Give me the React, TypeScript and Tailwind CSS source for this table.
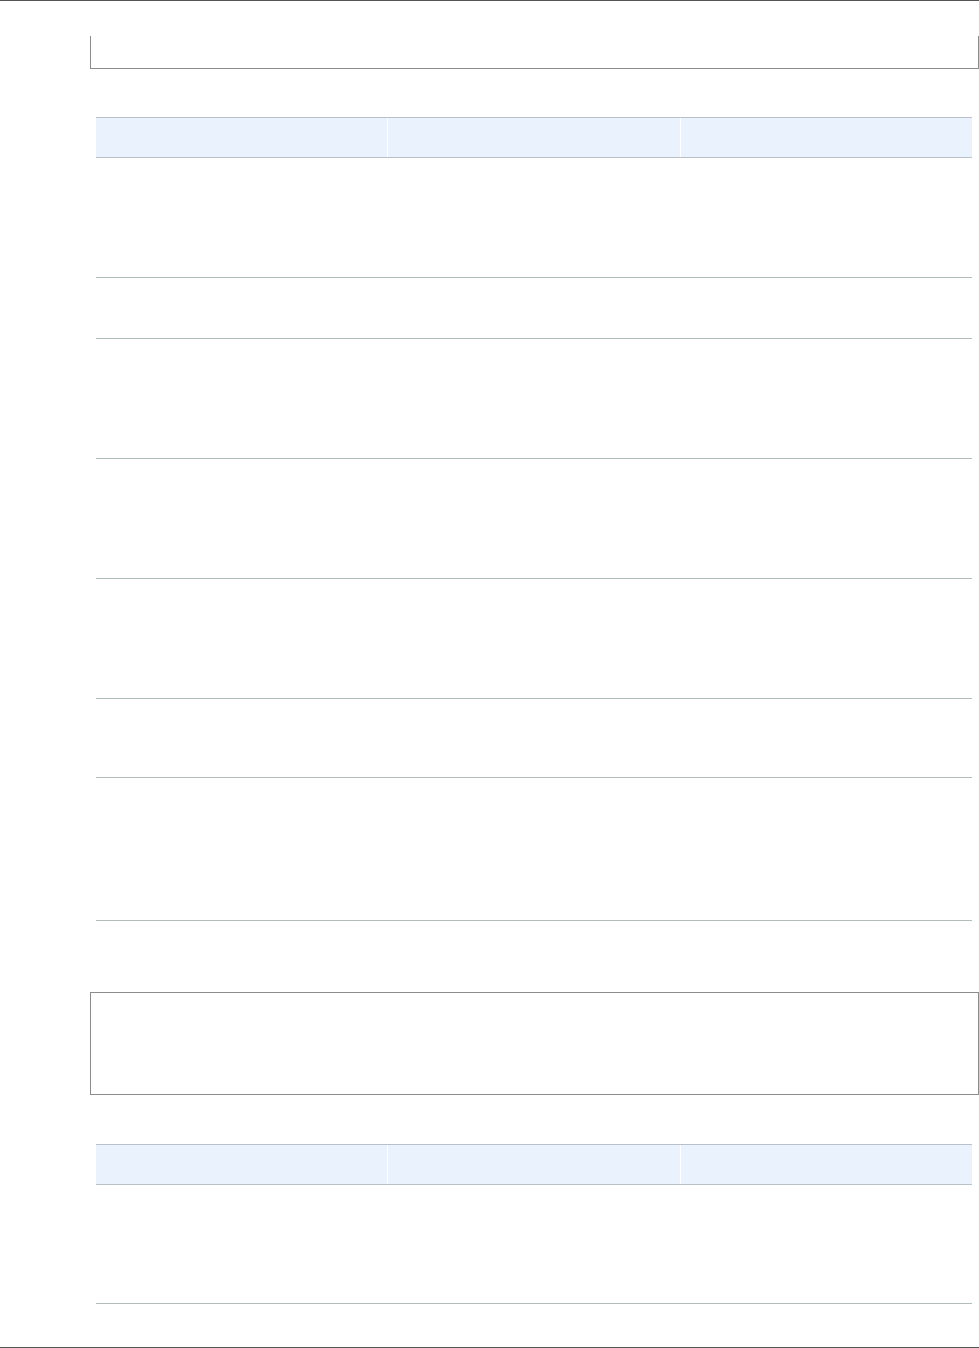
const tables = [
  { rows: [120, 61, 120, 120, 120, 79, 143] },
  { rows: [119] },
];

function HeaderRow() {
  return (
    <div className="flex h-[41px] border-y border-[#b8c1c9] bg-[#eaf2fd]">
      <div className="flex-1" />
      <div className="w-px bg-white" />
      <div className="flex-1" />
      <div className="w-px bg-white" />
      <div className="flex-1" />
    </div>
  );
}

function DataTable({ rows }: { rows: number[] }) {
  return (
    <div className="ml-[96px] w-[876px]">
      <HeaderRow />
      {rows.map((h, i) => (
        <div
          key={i}
          className="grid grid-cols-3 border-b border-[#b1bdba]"
          style={{ height: h }}
        >
          <div />
          <div />
          <div />
        </div>
      ))}
    </div>
  );
}

export default function App() {
  return (
    <div className="w-[979px] h-[1348px] bg-white font-['Liberation_Sans',sans-serif] flex flex-col">
      <div className="h-px bg-[#555555]" />
      <div className="mt-[35px] ml-[90px] w-[889px] h-[33px] border-x border-b border-[#8c8c8c]" />
      <div className="mt-[48px]">
        <DataTable rows={tables[0].rows} />
      </div>
      <div className="mt-[71px] ml-[90px] w-[889px] h-[103px] border border-[#8c8c8c]" />
      <div className="mt-[49px]">
        <DataTable rows={tables[1].rows} />
      </div>
      <div className="mt-[43px] h-px bg-[#555555]" />
    </div>
  );
}
